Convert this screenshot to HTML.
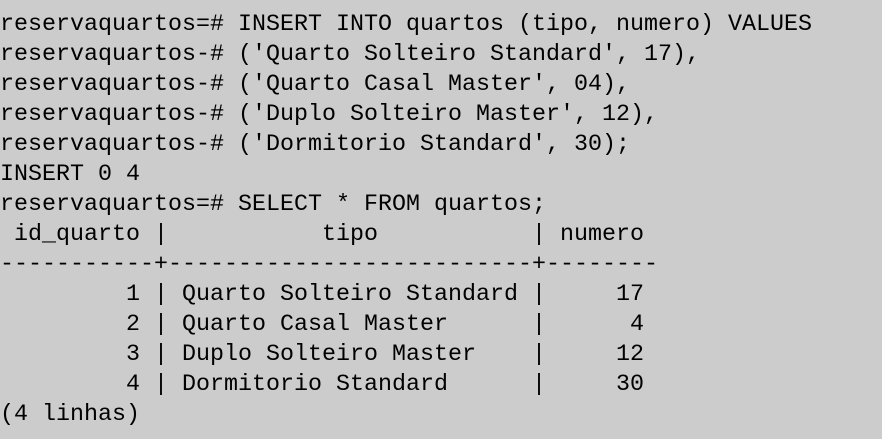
<!DOCTYPE html><html><head><style>
html,body{margin:0;padding:0;background:#cccccc;width:882px;height:439px;overflow:hidden}
pre{margin:0;position:absolute;left:0;top:10px;font-family:"Liberation Mono",monospace;font-size:23.33px;line-height:30px;color:#000}
</style></head><body><pre>reservaquartos=# INSERT INTO quartos (tipo, numero) VALUES
reservaquartos-# ('Quarto Solteiro Standard', 17),
reservaquartos-# ('Quarto Casal Master', 04),
reservaquartos-# ('Duplo Solteiro Master', 12),
reservaquartos-# ('Dormitorio Standard', 30);
INSERT 0 4
reservaquartos=# SELECT * FROM quartos;
 id_quarto |           tipo           | numero
-----------+--------------------------+--------
         1 | Quarto Solteiro Standard |     17
         2 | Quarto Casal Master      |      4
         3 | Duplo Solteiro Master    |     12
         4 | Dormitorio Standard      |     30
(4 linhas)</pre></body></html>
